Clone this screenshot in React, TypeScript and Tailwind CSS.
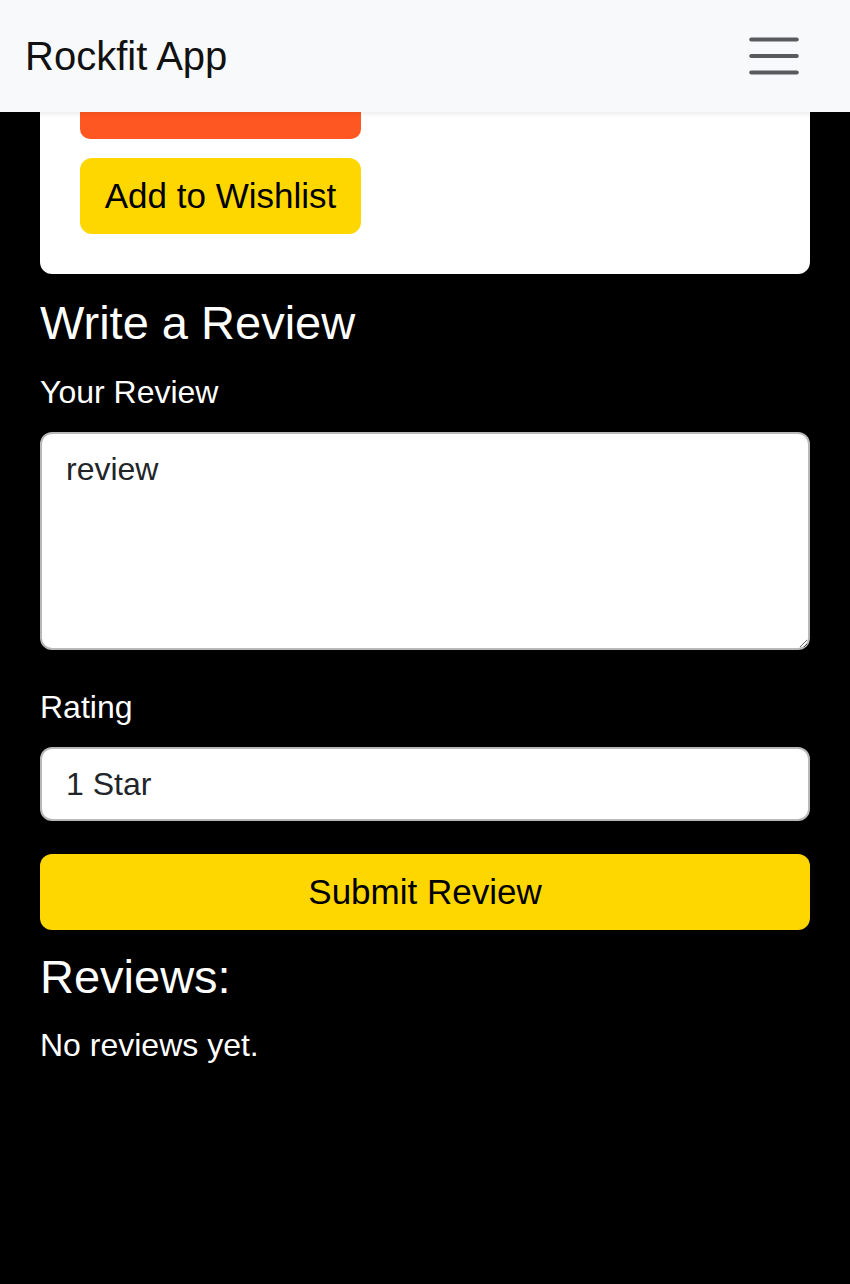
import React from "react";

export default function App() {
  return (
    <div
      className="min-h-[1284px] bg-black"
      style={{ fontFamily: '"Liberation Sans", Arial, sans-serif' }}
    >
      <nav className="relative z-10 flex h-[112px] items-center justify-between bg-[#f8f9fa] pl-[25px] pr-[45px] shadow-[0_2px_5px_rgba(0,0,0,0.08)]">
        <span className="text-[40px] leading-[58px] text-[#111]">Rockfit App</span>
        <button className="flex h-[62px] w-[62px] items-center justify-center" aria-label="Toggle navigation">
          <svg width="62" height="62" viewBox="0 0 30 30" fill="none">
            <path
              d="M4 7h22M4 15h22M4 23h22"
              stroke="rgba(33,37,41,0.75)"
              strokeWidth="2"
              strokeLinecap="round"
            />
          </svg>
        </button>
      </nav>

      <div className="px-10">
        <div className="rounded-b-[12px] bg-white px-10 pb-10">
          <div className="h-[27px] w-[281px] rounded-b-[10px] bg-[#ff5722]" />
          <button className="mt-[19px] flex h-[76px] w-[281px] items-center justify-center rounded-[12px] bg-[#ffd700] text-[35px] leading-[52px] text-black">
            Add to Wishlist
          </button>
        </div>

        <h2 className="mt-[21px] mb-[18px] text-[47px] leading-[55px] text-white">Write a Review</h2>

        <label className="mb-4 block text-[32px] leading-[48px] text-white">Your Review</label>
        <textarea
          className="block h-[218px] w-full resize-y rounded-[12px] border-2 border-[#b8b8b8] bg-white px-6 py-[11px] text-[32px] leading-[48px] text-[#212529] outline-none"
          defaultValue="review"
        />

        <label className="mt-[33px] mb-4 block text-[32px] leading-[48px] text-white">Rating</label>
        <select
          className="block h-[74px] w-full appearance-none rounded-[12px] border-2 border-[#b8b8b8] bg-white px-6 py-[11px] text-[32px] leading-[48px] text-[#212529] outline-none"
          defaultValue="1"
        >
          <option value="1">1 Star</option>
          <option value="2">2 Stars</option>
          <option value="3">3 Stars</option>
          <option value="4">4 Stars</option>
          <option value="5">5 Stars</option>
        </select>

        <button className="mt-[33px] flex h-[76px] w-full items-center justify-center rounded-[12px] bg-[#ffd700] text-[35px] leading-[52px] text-black">
          Submit Review
        </button>

        <h2 className="mt-[19px] mb-[17px] text-[47px] leading-[55px] text-white">Reviews:</h2>
        <p className="text-[32px] leading-[48px] text-white">No reviews yet.</p>
      </div>
    </div>
  );
}
